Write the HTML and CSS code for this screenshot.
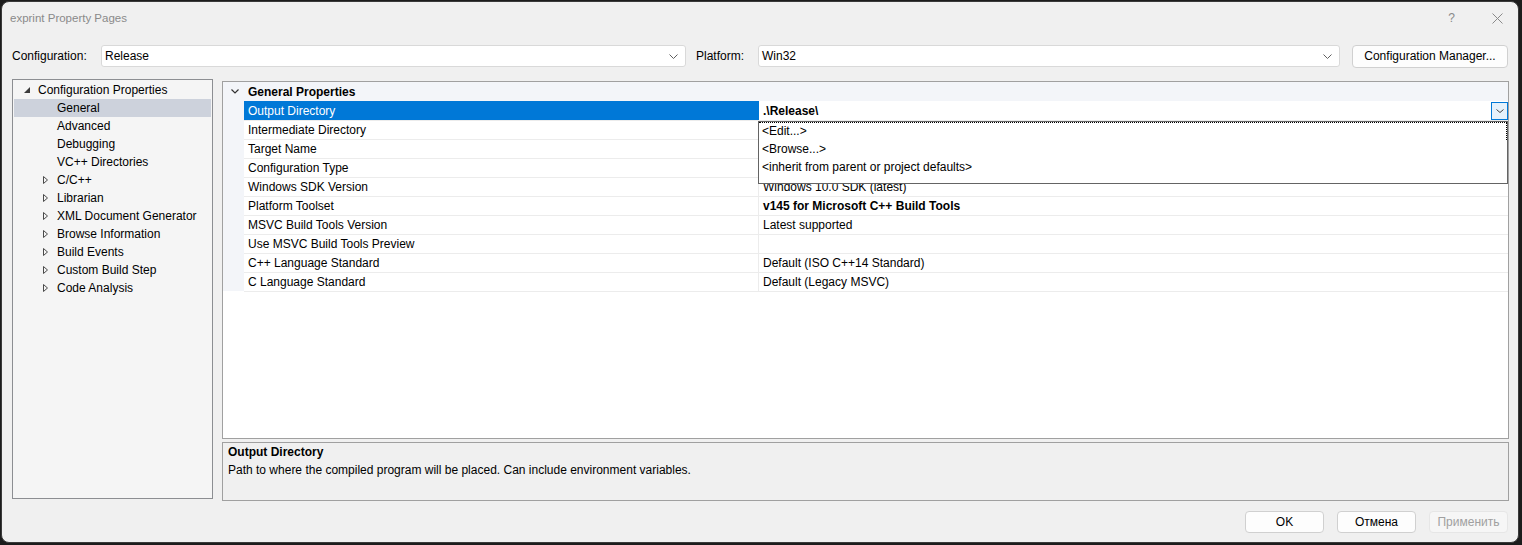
FILE: index.html
```html
<!DOCTYPE html>
<html lang="en">
<head>
  <meta charset="UTF-8" />
  <title>exprint Property Pages</title>
  <link rel="stylesheet" href="styles.css">
</head>
<body>
  <div class="window">
    <!-- Title bar -->
    <div class="titlebar">
      <span class="title">exprint Property Pages</span>
      <div class="caption">
        <span class="help">?</span>
        <svg class="close" width="11" height="11" viewBox="0 0 11 11">
          <path d="M0.5 0.5 L10.5 10.5 M10.5 0.5 L0.5 10.5" stroke="#8a8a8a" stroke-width="1" fill="none"/>
        </svg>
      </div>
    </div>

    <!-- Configuration / platform row -->
    <div class="config-row">
      <label class="lbl lbl-config">Configuration:</label>
      <div class="combo combo-config">
        <span>Release</span>
        <svg width="9" height="5" viewBox="0 0 9 5"><path d="M0.5 0.5 L4.5 4.5 L8.5 0.5" stroke="#606060" fill="none"/></svg>
      </div>
      <label class="lbl lbl-platform">Platform:</label>
      <div class="combo combo-platform">
        <span>Win32</span>
        <svg width="9" height="5" viewBox="0 0 9 5"><path d="M0.5 0.5 L4.5 4.5 L8.5 0.5" stroke="#606060" fill="none"/></svg>
      </div>
      <button class="btn btn-manager">Configuration Manager...</button>
    </div>

    <div class="content">
      <!-- Left tree -->
      <div class="tree">
        <div class="tree-item root">
          <svg class="twisty" width="6" height="6" viewBox="0 0 6 6"><path d="M6 0 L6 6 L0 6 Z" fill="#3c3c3c"/></svg>
          <span>Configuration Properties</span>
        </div>
        <div class="tree-item child selected"><i class="twisty"></i><span>General</span></div>
        <div class="tree-item child"><i class="twisty"></i><span>Advanced</span></div>
        <div class="tree-item child"><i class="twisty"></i><span>Debugging</span></div>
        <div class="tree-item child"><i class="twisty"></i><span>VC++ Directories</span></div>
        <div class="tree-item child">
          <svg class="twisty" width="5" height="8" viewBox="0 0 5 8"><path d="M0.5 0.5 L4.5 4 L0.5 7.5 Z" stroke="#4a4a4a" fill="none"/></svg>
          <span>C/C++</span>
        </div>
        <div class="tree-item child">
          <svg class="twisty" width="5" height="8" viewBox="0 0 5 8"><path d="M0.5 0.5 L4.5 4 L0.5 7.5 Z" stroke="#4a4a4a" fill="none"/></svg>
          <span>Librarian</span>
        </div>
        <div class="tree-item child">
          <svg class="twisty" width="5" height="8" viewBox="0 0 5 8"><path d="M0.5 0.5 L4.5 4 L0.5 7.5 Z" stroke="#4a4a4a" fill="none"/></svg>
          <span>XML Document Generator</span>
        </div>
        <div class="tree-item child">
          <svg class="twisty" width="5" height="8" viewBox="0 0 5 8"><path d="M0.5 0.5 L4.5 4 L0.5 7.5 Z" stroke="#4a4a4a" fill="none"/></svg>
          <span>Browse Information</span>
        </div>
        <div class="tree-item child">
          <svg class="twisty" width="5" height="8" viewBox="0 0 5 8"><path d="M0.5 0.5 L4.5 4 L0.5 7.5 Z" stroke="#4a4a4a" fill="none"/></svg>
          <span>Build Events</span>
        </div>
        <div class="tree-item child">
          <svg class="twisty" width="5" height="8" viewBox="0 0 5 8"><path d="M0.5 0.5 L4.5 4 L0.5 7.5 Z" stroke="#4a4a4a" fill="none"/></svg>
          <span>Custom Build Step</span>
        </div>
        <div class="tree-item child">
          <svg class="twisty" width="5" height="8" viewBox="0 0 5 8"><path d="M0.5 0.5 L4.5 4 L0.5 7.5 Z" stroke="#4a4a4a" fill="none"/></svg>
          <span>Code Analysis</span>
        </div>
      </div>

      <!-- Right side: property grid + description -->
      <div class="right">
        <div class="grid">
          <div class="category">
            <svg class="cat-chevron" width="8" height="5" viewBox="0 0 8 5"><path d="M0.5 0.5 L4 4 L7.5 0.5" stroke="#333" stroke-width="1.2" fill="none"/></svg>
            <span>General Properties</span>
          </div>
          <div class="rows">
            <div class="row selected">
              <div class="name">Output Directory</div>
              <div class="value bold">.\Release\
                <span class="drop-btn">
                  <svg width="8" height="4" viewBox="0 0 8 4"><path d="M0.5 0.5 L4 3.5 L7.5 0.5" stroke="#404040" fill="none"/></svg>
                </span>
              </div>
            </div>
            <div class="row"><div class="name">Intermediate Directory</div><div class="value"></div></div>
            <div class="row"><div class="name">Target Name</div><div class="value"></div></div>
            <div class="row"><div class="name">Configuration Type</div><div class="value"></div></div>
            <div class="row"><div class="name">Windows SDK Version</div><div class="value">Windows 10.0 SDK (latest)</div></div>
            <div class="row"><div class="name">Platform Toolset</div><div class="value bold">v145 for Microsoft C++ Build Tools</div></div>
            <div class="row"><div class="name">MSVC Build Tools Version</div><div class="value">Latest supported</div></div>
            <div class="row"><div class="name">Use MSVC Build Tools Preview</div><div class="value"></div></div>
            <div class="row"><div class="name">C++ Language Standard</div><div class="value">Default (ISO C++14 Standard)</div></div>
            <div class="row last"><div class="name">C Language Standard</div><div class="value">Default (Legacy MSVC)</div></div>
          </div>

          <!-- open dropdown list -->
          <div class="popup">
            <div class="popup-item focused">&lt;Edit...&gt;</div>
            <div class="popup-item">&lt;Browse...&gt;</div>
            <div class="popup-item">&lt;inherit from parent or project defaults&gt;</div>
          </div>
        </div>

        <div class="desc">
          <div class="desc-title">Output Directory</div>
          <div>Path to where the compiled program will be placed. Can include environment variables.</div>
        </div>
      </div>
    </div>

    <div class="footer">
      <button class="btn">OK</button>
      <button class="btn">Отмена</button>
      <button class="btn disabled">Применить</button>
    </div>
  </div>
</body>
</html>
```

FILE: styles.css
```css
/* Base */
* { box-sizing: border-box; margin: 0; padding: 0; }
html, body { height: 100%; overflow: hidden; }
body {
  background: #1c1c1c;
  font-family: "Liberation Sans", Arial, sans-serif;
  font-size: 12px;
  color: #000;
}

/* Dialog frame */
.window {
  margin: 1px 3px 0 1px;
  height: 542px;
  border: 1px solid #3a3a3a;
  border-radius: 8px;
  background: #f0f0f0;
  display: flex;
  flex-direction: column;
  overflow: hidden;
}

/* Title bar */
.titlebar {
  height: 32px;
  display: flex;
  align-items: center;
  padding-left: 8px;
}
.title {
  color: #8a8a8a;
  font-size: 11.5px;
}
.caption {
  margin-left: auto;
  display: flex;
  align-items: center;
  padding-right: 15px;
}
.help {
  color: #8a8a8a;
  font-size: 12px;
  margin-right: 37px;
}
.close { display: block; }

/* Configuration row */
.config-row {
  margin-top: 10px;
  height: 24px;
  display: flex;
  align-items: center;
  padding-left: 10px;
}
.lbl { width: 89px; }
.lbl-platform { margin-left: 10px; width: 62px; }
.combo {
  height: 22px;
  background: #fff;
  border: 1px solid #d9d9d9;
  border-radius: 3px;
  display: flex;
  align-items: center;
  padding: 0 7px 0 3px;
}
.combo span { flex: 1; }
.combo-config { width: 585px; }
.combo-platform { width: 582px; }

.btn {
  font: inherit;
  color: #000;
  height: 23px;
  background: #fdfdfd;
  border: 1px solid #d0d0d0;
  border-radius: 4px;
}
.btn-manager { width: 156px; margin-left: 12px; }

/* Main area */
.content {
  margin-top: 11px;
  padding-left: 10px;
  display: flex;
  align-items: flex-start;
}

/* Tree */
.tree {
  width: 201px;
  height: 420px;
  border: 1px solid #8c8e92;
  background: #f5f5f5;
  padding-top: 1px;
}
.tree-item {
  height: 18px;
  margin: 0 1px;
  display: flex;
  align-items: center;
  white-space: nowrap;
}
.tree-item .twisty { flex: none; display: block; }
.tree-item.root { padding-left: 10px; }
.tree-item.root .twisty { margin-right: 8px; }
.tree-item.child { padding-left: 29px; }
.tree-item.child .twisty { width: 5px; margin-right: 9px; }
.tree-item.selected { background: #cdd2dc; }

/* Right column */
.right {
  margin-left: 9px;
  margin-top: 2px;
  width: 1287px;
  display: flex;
  flex-direction: column;
  gap: 3px;
}

/* Property grid */
.grid {
  position: relative;
  height: 358px;
  border: 1px solid #a0a0a0;
  background: #fff;
}
.category {
  height: 19px;
  background: #f3f5f9;
  display: flex;
  align-items: center;
  padding-left: 8px;
  font-weight: bold;
}
.cat-chevron { display: block; margin-right: 9px; }

.rows {
  background: #f3f5f9;
  padding-left: 21px;
}
.row {
  display: flex;
  height: 19px;
  background: #fff;
}
.row .name,
.row .value {
  border-top: 1px solid #ececec;
  line-height: 18px;
  padding-left: 4px;
  white-space: nowrap;
}
.row.last .name,
.row.last .value { border-bottom: 1px solid #ececec; height: 20px; }
.row .name {
  width: 515px;
  border-right: 1px solid #ececec;
}
.row .value {
  flex: 1;
  position: relative;
}
.row .value.bold { font-weight: bold; }
.row.selected .name {
  background: #0078d7;
  border-top-color: #0078d7;
  border-right-color: #0078d7;
  color: #fff;
}
.row.selected .value { border-top-color: #fff; }

.drop-btn {
  position: absolute;
  right: 0;
  top: 0;
  width: 17px;
  height: 18px;
  border: 1px solid #0078d7;
  background: #e5f1fb;
  display: flex;
  align-items: center;
  justify-content: center;
}
.drop-btn svg { display: block; }

/* Open list under the value cell */
.popup {
  position: absolute;
  left: 535px;
  top: 39px;
  width: 750px;
  height: 63px;
  border: 1px solid #646464;
  background: #fff;
}
.popup-item {
  height: 18px;
  line-height: 18px;
  padding-left: 3px;
  white-space: nowrap;
}
.popup-item.focused {
  border-top: 1px dotted #000;
  border-right: 1px dotted #000;
  line-height: 16px;
}

/* Description box */
.desc {
  height: 59px;
  border: 1px solid #a0a0a0;
  background: #f0f0f0;
  padding: 0 5px;
  line-height: 18px;
}
.desc-title { font-weight: bold; }

/* Dialog buttons */
.footer {
  margin-top: 10px;
  display: flex;
  justify-content: flex-end;
  gap: 13px;
  padding-right: 10px;
}
.footer .btn { width: 79px; height: 22px; }
.footer .btn.disabled {
  color: #a0a0a0;
  background: #f6f6f6;
  border-color: #e6e6e6;
}
```
